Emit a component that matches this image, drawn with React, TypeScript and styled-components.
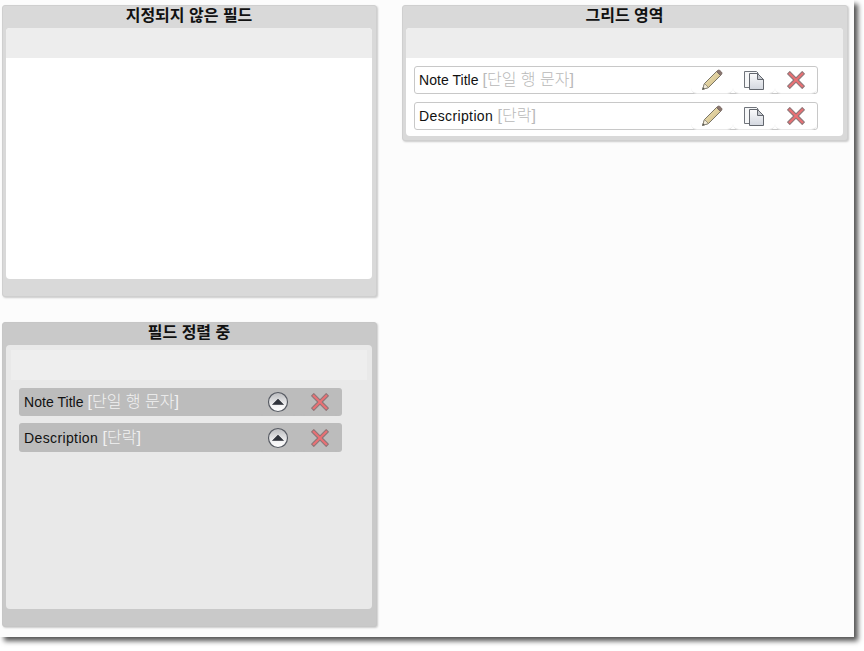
import styled, { createGlobalStyle } from "styled-components"

const GlobalStyle = createGlobalStyle`
	html, body {
		margin: 0;
		padding: 0;
		background-color: #ffffff;
		font-family: "Liberation Sans", "Noto Sans CJK KR", sans-serif;
	}
`

const Page = styled.div`
	height: 651px;
`

const Screen = styled.div`
	box-sizing: border-box;
	width: 854px;
	height: 637px;
	padding: 5px 6px 0 2px;
	display: flex;
	align-items: flex-start;
	gap: 25px;
	background-color: #fcfcfc;
	box-shadow: 4px 4px 5px #555555;
`

const Column = styled.div<{ $width: number }>`
	display: flex;
	flex-direction: column;
	gap: 25px;
	width: ${(p) => p.$width}px;
`

const Panel = styled.section<{ $height?: number; $sorting?: boolean; $tight?: boolean }>`
	box-sizing: border-box;
	display: flex;
	flex-direction: column;
	height: ${(p) => (p.$height ? `${p.$height}px` : "auto")};
	padding: 0 4px ${(p) => (p.$tight ? "4px" : "17px")} 3px;
	border: 1px solid ${(p) => (p.$sorting ? "#c6c6c6" : "#cfcfcf")};
	border-radius: 3px;
	background-color: ${(p) => (p.$sorting ? "#c9c9c9" : "#d9d9d9")};
	box-shadow: 1px 1px 2px rgba(0, 0, 0, 0.2);
`

const PanelTitle = styled.h2`
	height: 22px;
	margin: 0;
	font-size: 16px;
	font-weight: bold;
	line-height: 19px;
	text-align: center;
	color: #111111;
`

const PanelBody = styled.div<{ $sorting?: boolean; $tight?: boolean }>`
	flex: ${(p) => (p.$tight ? "none" : "1")};
	padding-bottom: ${(p) => (p.$tight ? "6px" : "0")};
	border-radius: 4px;
	overflow: hidden;
	background-color: ${(p) => (p.$sorting ? "#e9e9e9" : "#ffffff")};
`

const DropBand = styled.div<{ $sorting?: boolean }>`
	height: 30px;
	margin: ${(p) => (p.$sorting ? "5px 5px 0" : "0")};
	background-color: ${(p) => (p.$sorting ? "#eeeeee" : "#ededed")};
`

const FieldList = styled.div<{ $sorting?: boolean }>`
	display: flex;
	flex-direction: column;
	gap: ${(p) => (p.$sorting ? "7px" : "8px")};
	width: ${(p) => (p.$sorting ? "323px" : "404px")};
	margin: 8px 0 0 ${(p) => (p.$sorting ? "13px" : "8px")};
`

const FieldRow = styled.div<{ $sorting?: boolean }>`
	box-sizing: border-box;
	display: flex;
	align-items: center;
	height: 28px;
	padding: 0 ${(p) => (p.$sorting ? "1px" : "0")} 0 ${(p) => (p.$sorting ? "5px" : "4px")};
	border: ${(p) => (p.$sorting ? "none" : "1px solid #c8c8c8")};
	border-radius: 3px;
	background-color: ${(p) => (p.$sorting ? "#bcbcbc" : "#ffffff")};
	font-size: 14px;
	color: #111111;

	&:last-child {
		height: ${(p) => (p.$sorting ? "29px" : "28px")};
	}

	&:last-child > button {
		height: ${(p) => (p.$sorting ? "29px" : "28px")};
		padding-top: ${(p) => (p.$sorting ? "1px" : "0")};
	}
`

const FieldName = styled.span<{ $spacing: number }>`
	flex: 1;
	position: relative;
	top: -2px;
	white-space: nowrap;
	letter-spacing: ${(p) => p.$spacing}px;
`

const FieldType = styled.span<{ $sorting?: boolean }>`
	font-size: 16px;
	font-weight: 300;
	letter-spacing: 0;
	color: ${(p) => (p.$sorting ? "#f2f2f2" : "#b9b9b9")};
`

const ActionButton = styled.button<{ $sorting?: boolean }>`
	box-sizing: border-box;
	display: flex;
	justify-content: center;
	align-items: center;
	width: 42px;
	height: 28px;
	margin: ${(p) => (p.$sorting ? "0" : "-1px 0 -1px")};
	padding: 0;
	border: none;
	border-bottom: 1px solid ${(p) => (p.$sorting ? "#bcbcbc" : "#e8e8e8")};
	border-radius: 0 0 6px 6px;
	background: transparent;
`

const PencilIcon = () => (
	<svg width="22" height="22" viewBox="0 0 22 22">
		<defs>
			<linearGradient id="pencilBody" x1="0" y1="0" x2="1" y2="1">
				<stop offset="0" stopColor="#f5ecc4" />
				<stop offset="1" stopColor="#c9b277" />
			</linearGradient>
		</defs>
		<path d="M1.5 20.5 L3.5 14.5 L15.5 2.5 L19.5 6.5 L7.5 18.5 Z" fill="url(#pencilBody)" stroke="#7a7566" strokeWidth="1" strokeLinejoin="round" />
		<path d="M15.5 2.5 L17 1.2 Q18 0.6 19 1.6 L20.5 3 Q21.4 4 20.8 5 L19.5 6.5 Z" fill="#8a7670" stroke="#75665f" strokeWidth="0.8" />
		<path d="M1.5 20.5 L3.5 14.5 L7.5 18.5 Z" fill="#f1ead8" stroke="#7a7566" strokeWidth="0.7" strokeLinejoin="round" />
		<path d="M1.5 20.5 L2.2 18.2 L3.8 19.7 Z" fill="#555555" />
	</svg>
)

const CopyIcon = () => (
	<svg width="22" height="22" viewBox="0 0 22 22">
		<defs>
			<linearGradient id="copyPage" x1="0" y1="0" x2="0" y2="1">
				<stop offset="0" stopColor="#fbfbfc" />
				<stop offset="1" stopColor="#d3d7df" />
			</linearGradient>
		</defs>
		<path d="M1.5 2.5 H13.5 L15 4 V18.5 H1.5 Z" fill="#f6f7f8" stroke="#70747b" strokeWidth="1" />
		<path d="M6.5 4.5 H14.5 L20.5 10.5 V20.5 H6.5 Z" fill="url(#copyPage)" stroke="#63676e" strokeWidth="1" />
		<path d="M14.5 4.5 V10.5 H20.5 Z" fill="#c6c9cf" stroke="#63676e" strokeWidth="1" strokeLinejoin="round" />
	</svg>
)

const DeleteIcon = () => (
	<svg width="20" height="20" viewBox="0 0 20 20">
		<path d="M3.8 1.6 L10 7.8 L16.2 1.6 L18.4 3.8 L12.2 10 L18.4 16.2 L16.2 18.4 L10 12.2 L3.8 18.4 L1.6 16.2 L7.8 10 L1.6 3.8 Z" fill="#ec7074" stroke="#8f7678" strokeWidth="1.1" strokeLinejoin="round" />
	</svg>
)

const MoveUpIcon = () => (
	<svg width="22" height="22" viewBox="0 0 22 22">
		<defs>
			<linearGradient id="moveUp" x1="0" y1="0" x2="0" y2="1">
				<stop offset="0" stopColor="#b9babd" />
				<stop offset="0.7" stopColor="#f4f4f5" />
				<stop offset="1" stopColor="#ffffff" />
			</linearGradient>
		</defs>
		<circle cx="11" cy="11" r="9.5" fill="url(#moveUp)" stroke="#575b63" strokeWidth="1.2" />
		<path d="M5.5 13.5 L11 8 L16.5 13.5 Z" fill="#30343c" stroke="#30343c" strokeWidth="0.6" strokeLinejoin="round" />
	</svg>
)

const fields = [
	{ name: "Note Title", type: "[단일 행 문자]", spacing: 0.04 },
	{ name: "Description", type: "[단락]", spacing: 0.38 },
]

export default function App() {
	return (
		<Page>
			<GlobalStyle />
			<Screen>
				<Column $width={375}>
					<Panel $height={292}>
						<PanelTitle>지정되지 않은 필드</PanelTitle>
						<PanelBody>
							<DropBand />
						</PanelBody>
					</Panel>
					<Panel $height={305} $sorting>
						<PanelTitle>필드 정렬 중</PanelTitle>
						<PanelBody $sorting>
							<DropBand $sorting />
							<FieldList $sorting>
								{fields.map((field) => (
									<FieldRow key={field.name} $sorting>
										<FieldName $spacing={field.spacing}>
											{field.name} <FieldType $sorting>{field.type}</FieldType>
										</FieldName>
										<ActionButton $sorting><MoveUpIcon /></ActionButton>
										<ActionButton $sorting><DeleteIcon /></ActionButton>
									</FieldRow>
								))}
							</FieldList>
						</PanelBody>
					</Panel>
				</Column>
				<Column $width={446}>
					<Panel $tight>
						<PanelTitle>그리드 영역</PanelTitle>
						<PanelBody $tight>
							<DropBand />
							<FieldList>
								{fields.map((field) => (
									<FieldRow key={field.name}>
										<FieldName $spacing={field.spacing}>
											{field.name} <FieldType>{field.type}</FieldType>
										</FieldName>
										<ActionButton><PencilIcon /></ActionButton>
										<ActionButton><CopyIcon /></ActionButton>
										<ActionButton><DeleteIcon /></ActionButton>
									</FieldRow>
								))}
							</FieldList>
						</PanelBody>
					</Panel>
				</Column>
			</Screen>
		</Page>
	)
}
